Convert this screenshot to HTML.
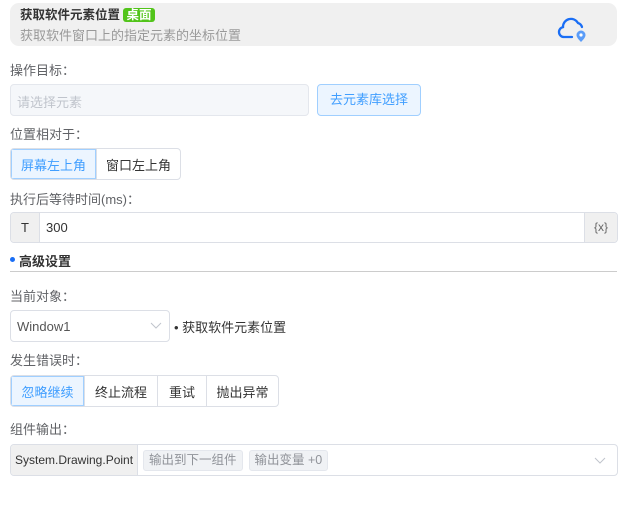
<!DOCTYPE html>
<html><head><meta charset="utf-8"><style>
*{box-sizing:border-box;margin:0;padding:0}
body{width:630px;height:526px;background:#fff;font-family:"Liberation Sans","Noto Sans CJK SC",sans-serif;font-size:13px;color:#333;position:relative;overflow:hidden}
.a{position:absolute}
.lbl{position:absolute;left:10px;font-size:13px;color:#606266}
.seg{position:absolute;display:flex;border:1px solid #dcdfe6;border-radius:4px;overflow:hidden}
.seg div{display:flex;align-items:center;justify-content:center;border-left:1px solid #dcdfe6;color:#333}
.seg div:first-child{border-left:none;background:#ecf5ff;color:#409eff;outline:1px solid #a0cfff;outline-offset:-1px}
</style></head><body>
<div class="a" style="left:10px;top:3px;width:607px;height:43px;background:#f0f0f0;border-radius:9px"></div>
<div class="a" style="left:20px;top:7px;font-weight:bold;font-size:12.5px;color:#333;line-height:17px">获取软件元素位置 <span style="background:#52c41a;color:#fff;border-radius:3px;padding:0 3px;font-weight:bold">桌面</span></div>
<div class="a" style="left:20px;top:27px;color:#999;font-size:13px;line-height:17px">获取软件窗口上的指定元素的坐标位置</div>
<svg class="a" style="left:556px;top:15px" width="34" height="30" viewBox="0 0 34 30"><path d="M16 22H8a5 5 0 0 1-1-9.9A8 8 0 0 1 22 8a6 6 0 0 1 4 4" fill="none" stroke="#1a6ef5" stroke-width="2.3" stroke-linecap="round"/><path d="M25 27c-3-3-4.5-5-4.5-7a4.5 4.5 0 0 1 9 0c0 2-1.5 4-4.5 7z" fill="#5a9cf8"/><circle cx="25" cy="20" r="1.6" fill="#fff"/></svg>

<div class="lbl" style="top:60px">操作目标：</div>
<div class="a" style="left:10px;top:84px;width:299px;height:32px;background:#f5f7fa;border:1px solid #e4e7ed;border-radius:4px;color:#c0c4cc;padding:7px 6px">请选择元素</div>
<div class="a" style="left:317px;top:84px;width:104px;height:32px;background:#ecf5ff;border:1px solid #a0cfff;border-radius:4px;color:#409eff;text-align:center;line-height:30px">去元素库选择</div>

<div class="lbl" style="top:124px">位置相对于：</div>
<div class="seg" style="left:10px;top:148px;width:171px;height:32px"><div style="width:85px">屏幕左上角</div><div style="width:84px">窗口左上角</div></div>

<div class="lbl" style="top:189px">执行后等待时间(ms)：</div>
<div class="a" style="left:10px;top:212px;width:608px;height:31px;border:1px solid #dcdfe6;border-radius:4px;overflow:hidden;display:flex">
<div style="width:29px;background:#f0f0f0;border-right:1px solid #dcdfe6;text-align:center;line-height:29px">T</div>
<div style="flex:1;padding-left:6px;line-height:29px">300</div>
<div style="width:33px;background:#f0f0f0;border-left:1px solid #dcdfe6;text-align:center;line-height:29px;color:#666;font-size:12px">{x}</div></div>

<div class="a" style="left:10px;top:257px;width:5px;height:5px;border-radius:50%;background:#1a6ef5"></div>
<div class="a" style="left:19px;top:251px;font-weight:bold;color:#333">高级设置</div>
<div class="a" style="left:10px;top:271px;width:607px;height:1px;background:#ccc"></div>

<div class="lbl" style="top:286px">当前对象：</div>
<div class="a" style="left:10px;top:310px;width:160px;height:32px;border:1px solid #dcdfe6;border-radius:4px;padding:8px 6px;color:#555">Window1</div>
<svg class="a" style="left:150px;top:322px" width="12" height="8"><path d="M1 1l5 5 5-5" fill="none" stroke="#c0c4cc" stroke-width="1"/></svg>
<div class="a" style="left:174px;top:317px;color:#333">• 获取软件元素位置</div>

<div class="lbl" style="top:350px">发生错误时：</div>
<div class="seg" style="left:10px;top:375px;width:269px;height:32px"><div style="width:73px">忽略继续</div><div style="width:73px">终止流程</div><div style="width:49px">重试</div><div style="width:72px">抛出异常</div></div>

<div class="lbl" style="top:419px">组件输出：</div>
<div class="a" style="left:10px;top:444px;width:608px;height:32px;border:1px solid #dcdfe6;border-radius:4px;overflow:hidden;display:flex;align-items:center">
<div style="width:127px;height:100%;background:#f0f0f0;border-right:1px solid #dcdfe6;line-height:30px;padding-left:4px;color:#333;font-size:12px">System.Drawing.Point</div>
<span style="margin-left:5px;background:#f0f2f5;border:1px solid #e4e7ed;border-radius:3px;padding:0 5px;color:#909399;font-size:12.5px;line-height:19px">输出到下一组件</span>
<span style="margin-left:6px;background:#f0f2f5;border:1px solid #e4e7ed;border-radius:3px;padding:0 5px;color:#909399;font-size:12.5px;line-height:19px">输出变量 +0</span>
</div>
<svg class="a" style="left:594px;top:457px" width="12" height="8"><path d="M1 1l5 5 5-5" fill="none" stroke="#c0c4cc" stroke-width="1"/></svg>
</body></html>
